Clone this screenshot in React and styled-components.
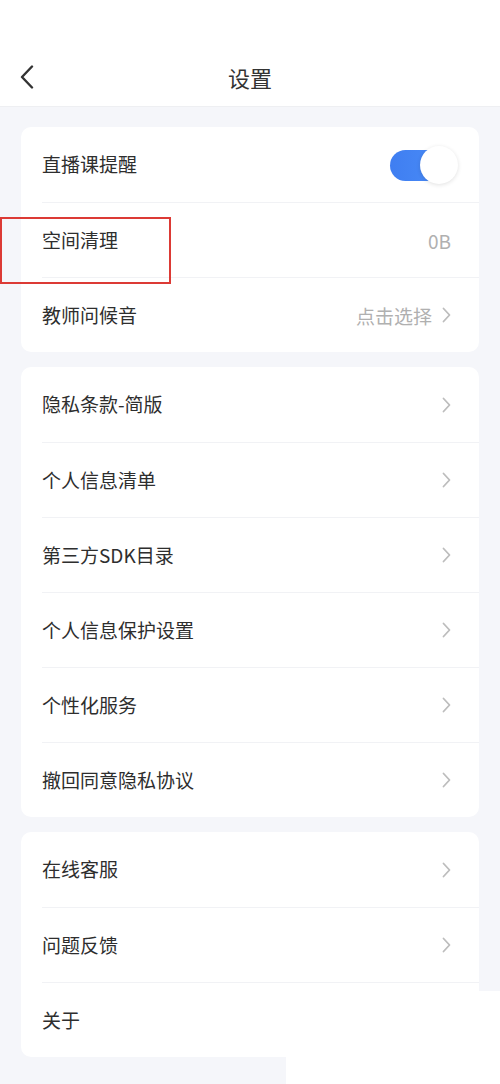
import React from 'react';
import styled, { createGlobalStyle } from 'styled-components';

const GlobalStyle = createGlobalStyle`
    body{
        margin: 0;
        background: #f5f6fa;
        font-family: "Noto Sans CJK SC", "Noto Sans", sans-serif;
    }
`

const Page = styled.div`
    position: relative;
    width: 500px;
    height: 1084px;
    overflow: hidden;
    background: #f5f6fa;
`
const Header = styled.div`
    display: flex;
    align-items: flex-end;
    justify-content: center;
    height: 106px;
    background: #fff;
    border-bottom: 1px solid #eeeff2;
    position: relative;
    h1{
        margin: 0 0 14px;
        font-size: 22px;
        font-weight: 400;
        color: #333;
        line-height: 30px;
    }
`
const BackButton = styled.div`
    position: absolute;
    left: 20px;
    bottom: 16px;
    width: 20px;
    height: 26px;
    display: flex;
    align-items: center;
`
const Content = styled.div`
    display: flex;
    flex-direction: column;
    gap: 15px;
    padding: 20px 21px;
`
const Card = styled.div`
    background: #fff;
    border-radius: 10px;
    overflow: hidden;
`
const Row = styled.div`
    display: flex;
    align-items: center;
    justify-content: space-between;
    height: 75px;
    margin-left: 21px;
    padding-right: 28px;
    border-top: ${props => props.first ? 'none' : '1px solid #f1f2f5'};
    box-sizing: border-box;
    .nome{
        font-size: 19px;
        color: #2e2e2e;
        margin-top: -2px;
    }
`
const Right = styled.div`
    display: flex;
    align-items: center;
    gap: 10px;
    font-size: 19px;
    color: #b0b0b0;
`
const Toggle = styled.div`
    position: relative;
    width: 68px;
    height: 38px;
    margin-right: -7px;
    .track{
        position: absolute;
        left: 0;
        top: 4px;
        width: 56px;
        height: 31px;
        border-radius: 16px;
        background: linear-gradient(90deg, #3f7ef1, #4a8cf7);
    }
    .knob{
        position: absolute;
        right: 0;
        top: 0;
        width: 38px;
        height: 38px;
        border-radius: 50%;
        background: #fff;
        box-shadow: 0 1px 4px rgba(0,0,0,0.12);
    }
`
const Mark = styled.div`
    position: absolute;
    left: 0;
    top: 217px;
    width: 171px;
    height: 67px;
    border: 2px solid #dc3a35;
    box-sizing: border-box;
`
const Patch = styled.div`
    position: absolute;
    left: 286px;
    top: 991px;
    right: 0;
    bottom: 0;
    background: #fff;
`

const Chevron = () => (
    <svg width="9" height="16" viewBox="0 0 9 16">
        <path d="M1.5 1.5 L7.5 8 L1.5 14.5" fill="none" stroke="#bdbdbd" strokeWidth="1.8" strokeLinecap="round" strokeLinejoin="round" />
    </svg>
)

const grupos = [
    [
        { name: '直播课提醒', toggle: true },
        { name: '空间清理', value: '0B' },
        { name: '教师问候音', value: '点击选择', arrow: true },
    ],
    [
        { name: '隐私条款-简版', arrow: true },
        { name: '个人信息清单', arrow: true },
        { name: '第三方SDK目录', arrow: true },
        { name: '个人信息保护设置', arrow: true },
        { name: '个性化服务', arrow: true },
        { name: '撤回同意隐私协议', arrow: true },
    ],
    [
        { name: '在线客服', arrow: true },
        { name: '问题反馈', arrow: true },
        { name: '关于' },
    ],
]

export default function App() {
    return (
        <Page>
            <GlobalStyle />
            <Header>
                <BackButton>
                    <svg width="14" height="24" viewBox="0 0 14 24">
                        <path d="M12 1.5 L2 12 L12 22.5" fill="none" stroke="#333" strokeWidth="2.4" strokeLinecap="round" strokeLinejoin="round" />
                    </svg>
                </BackButton>
                <h1>设置</h1>
            </Header>
            <Content>
                {grupos.map((grupo, i) => (
                    <Card key={i}>
                        {grupo.map((item, j) => (
                            <Row key={item.name} first={j === 0}>
                                <span className='nome'>{item.name}</span>
                                <Right>
                                    {item.value && <span>{item.value}</span>}
                                    {item.arrow && <Chevron />}
                                    {item.toggle && (
                                        <Toggle>
                                            <div className='track' />
                                            <div className='knob' />
                                        </Toggle>
                                    )}
                                </Right>
                            </Row>
                        ))}
                    </Card>
                ))}
            </Content>
            <Mark />
            <Patch />
        </Page>
    )
}
